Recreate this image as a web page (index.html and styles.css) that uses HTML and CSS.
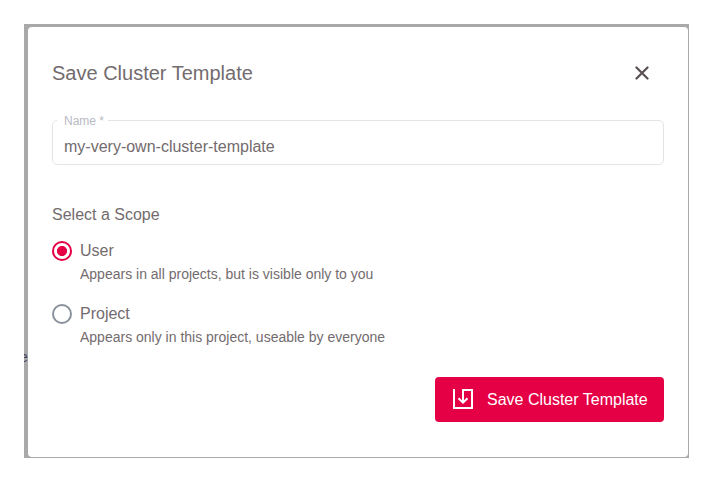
FILE: index.html
```html
<!DOCTYPE html>
<html lang="en">
<head>
<meta charset="utf-8">
<title>Save Cluster Template</title>
<link rel="stylesheet" href="styles.css">
</head>
<body>
<div class="backdrop">
  <span class="behind">e</span>
  <form class="dialog">
    <header class="head">
      <h1 class="title">Save Cluster Template</h1>
      <svg class="close" viewBox="0 0 14 14"><path d="M1.5 1.5 12.5 12.5M12.5 1.5 1.5 12.5"/></svg>
    </header>
    <fieldset class="field">
      <legend class="label">Name *</legend>
      <div class="value">my-very-own-cluster-template</div>
    </fieldset>
    <div class="scope">Select a Scope</div>
    <div class="option">
      <span class="radio checked"></span>
      <div>
        <div class="name">User</div>
        <div class="hint">Appears in all projects, but is visible only to you</div>
      </div>
    </div>
    <div class="option">
      <span class="radio"></span>
      <div>
        <div class="name">Project</div>
        <div class="hint">Appears only in this project, useable by everyone</div>
      </div>
    </div>
    <button class="save" type="button">
      <svg class="icon" viewBox="0 0 20 20"><path d="M1 0V19H19V1H10V13.5M5.5 9.2 10 13.7 14.5 9.2"/></svg>
      <span>Save Cluster Template</span>
    </button>
  </form>
</div>
</body>
</html>
```
FILE: styles.css
```css
* { box-sizing: border-box; }

body {
  margin: 0;
  padding: 24px;
  background: #fff;
  font-family: "Liberation Sans", Arial, sans-serif;
  font-size: 16px;
  color: #736b6e;
}

.backdrop {
  position: relative;
  width: 665px;
  height: 434px;
  padding: 3px 1px 1px 4px;
  background: #a9a9a9;
}

.behind {
  position: absolute;
  left: -4px;
  top: 325px;
  font-size: 14px;
  line-height: 16px;
  color: #3f3f58;
  clip-path: inset(0 0 0 4px);
}

.dialog {
  position: relative;
  display: flex;
  flex-direction: column;
  width: 660px;
  height: 430px;
  padding: 34px 24px 0;
  background: #fff;
  border-radius: 4px;
}

.head {
  display: flex;
  align-items: center;
  justify-content: space-between;
  height: 24px;
  padding-right: 15px;
}

.title {
  margin: 0;
  font-size: 20px;
  font-weight: 400;
  line-height: 24px;
}

.close {
  width: 14px;
  height: 14px;
  fill: none;
  stroke: #5c5356;
  stroke-width: 2.3;
  stroke-linecap: round;
}

.field {
  width: 612px;
  height: 52px;
  margin: 28px 0 0;
  padding: 0 11px;
  border: 1px solid #e2e5e6;
  border-radius: 5px;
}

.label {
  height: 14px;
  margin-left: -7px;
  padding: 1px 4px 0 7px;
  font-size: 12px;
  line-height: 14px;
  color: #b6bac2;
}

.value {
  padding-top: 11px;
  line-height: 18px;
}

.scope {
  margin: 41px 0 17px;
  line-height: 18px;
}

.option {
  display: flex;
  gap: 8px;
  height: 63px;
}

.radio {
  flex: none;
  width: 20px;
  height: 20px;
  border: 2px solid #89929c;
  border-radius: 50%;
}

.checked {
  border-color: #e50046;
  background: radial-gradient(circle, #e50046 4.7px, transparent 5.4px);
}

.name {
  padding-top: 1px;
  line-height: 18px;
}

.hint {
  margin-top: 6px;
  font-size: 14px;
  line-height: 16px;
}

.save {
  display: flex;
  align-items: center;
  align-self: flex-end;
  gap: 14px;
  width: 229px;
  height: 45px;
  margin-top: 9.5px;
  padding: 0 0 0 18px;
  border: 0;
  border-radius: 4px;
  background: #e50046;
  font: inherit;
  color: #fff;
  white-space: nowrap;
}

.save span {
  padding-top: 2px;
}

.icon {
  width: 20px;
  height: 20px;
  fill: none;
  stroke: #fff;
  stroke-width: 2;
}
```
